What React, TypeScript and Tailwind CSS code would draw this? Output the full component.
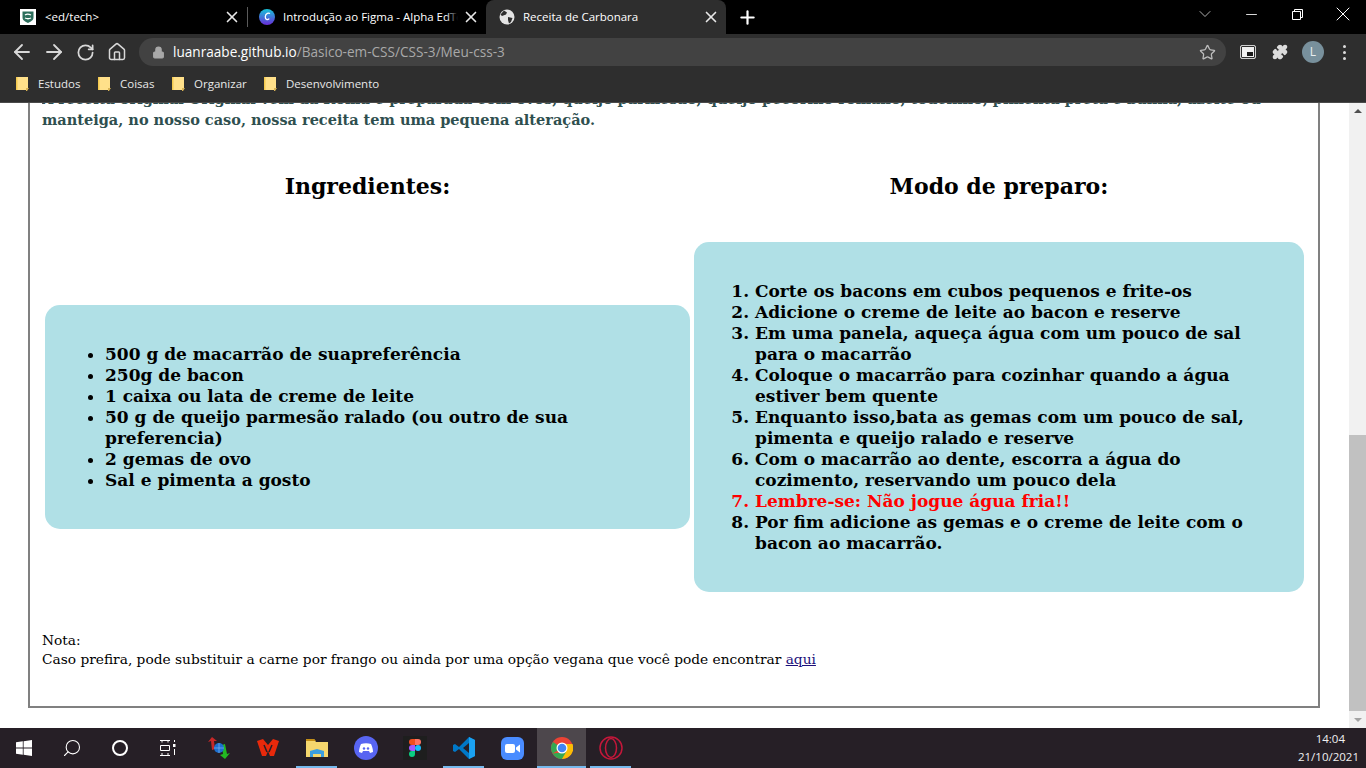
import { ArrowLeft, ArrowRight, RotateCw, Home, Lock, Star, Puzzle, X, Plus, ChevronDown, Minus, Search } from "lucide-react";

const bookmarks = [
  { nome: "Estudos", w: "w-[82px]" },
  { nome: "Coisas", w: "w-[74px]" },
  { nome: "Organizar", w: "w-[92px]" },
  { nome: "Desenvolvimento", w: "w-[130px]" },
];

const ingredientes = [
  "500 g de macarrão de suapreferência",
  "250g de bacon",
  "1 caixa ou lata de creme de leite",
  "50 g de queijo parmesão ralado (ou outro de sua preferencia)",
  "2 gemas de ovo",
  "Sal e pimenta a gosto",
];

const passos = [
  "Corte os bacons em cubos pequenos e frite-os",
  "Adicione o creme de leite ao bacon e reserve",
  "Em uma panela, aqueça água com um pouco de sal para o macarrão",
  "Coloque o macarrão para cozinhar quando a água estiver bem quente",
  "Enquanto isso,bata as gemas com um pouco de sal, pimenta e queijo ralado e reserve",
  "Com o macarrão ao dente, escorra a água do cozimento, reservando um pouco dela",
  "Lembre-se: Não jogue água fria!!",
  "Por fim adicione as gemas e o creme de leite com o bacon ao macarrão.",
];

function Folder() {
  return (
    <svg width="13" height="14" viewBox="0 0 13 14" className="shrink-0">
      <path d="M0 0h12v11l-1 2H0z" fill="#ffe08a" />
      <path d="M10 11h3l-2 3h-1z" fill="#d9b354" />
      <path d="M0 0h1.500v13H0z" fill="#f3c94f" />
    </svg>
  );
}

function TaskIcon({ children, open, active, wide }: { children: React.ReactNode; open?: boolean; active?: boolean; wide?: boolean }) {
  return (
    <div className={"relative h-[40px] flex items-center justify-center " + (wide ? "w-[49px] " : "w-[48px] ") + (active ? "bg-[#4d474c]" : "")}>
      {children}
      {open && <div className={"absolute bottom-0 h-[2px] bg-[#76b9ed] " + (active ? "left-0 right-0" : "left-[4px] right-[4px]")} />}
    </div>
  );
}

export default function App() {
  return (
    <div className="w-[1366px] h-[768px] flex flex-col overflow-hidden font-['Open_Sans',sans-serif] bg-white">
      {/* abas */}
      <div className="h-[34px] bg-black flex items-center shrink-0">
        <div className="w-[247px] h-[34px] flex items-center pl-[20px] pr-[6px] gap-[9px]">
          <svg width="16" height="16" viewBox="0 0 16 16" className="shrink-0">
            <rect width="16" height="16" fill="#fff" />
            <path d="M2.500 2.500h11v6c0 3-3 4-5.500 5.500-2.500-1.500-5.500-2.500-5.500-5.500z" fill="#2c6e5c" />
            <path d="M5 6c2-1.500 4-1 6 0M5 9c2 1 4 1 6 0" stroke="#fff" strokeWidth="1.300" fill="none" />
          </svg>
          <span className="flex-1 text-[11.500px] text-white">&lt;ed/tech&gt;</span>
          <X size={18} strokeWidth={2.2} className="text-[#e8e8e8]" />
        </div>
        <div className="w-px h-[20px] bg-[#5a5a5a]" />
        <div className="w-[238px] h-[34px] flex items-center pl-[11px] pr-[6px] gap-[8px]">
          <svg width="16" height="16" viewBox="0 0 16 16" className="shrink-0">
            <defs>
              <linearGradient id="canva" x1="0" y1="0" x2="0" y2="1">
                <stop offset="0" stopColor="#16c4d8" />
                <stop offset="1" stopColor="#6a2bd9" />
              </linearGradient>
            </defs>
            <circle cx="8" cy="8" r="8" fill="url(#canva)" />
            <path d="M10.800 4.800c-.8-1.500-4.300-.5-4.500 3-.2 3 2.200 3.500 4 1.800" fill="none" stroke="#fff" strokeWidth="1.300" />
          </svg>
          <div className="relative flex-1 overflow-hidden whitespace-nowrap text-[11.500px] text-white">
            Introdução ao Figma - Alpha EdTech
            <div className="absolute inset-y-0 right-0 w-[12px] bg-gradient-to-r from-transparent to-black" />
          </div>
          <X size={18} strokeWidth={2.2} className="-ml-[4px] text-[#e8e8e8]" />
        </div>
        <div className="w-[240px] h-[34px] bg-[#2e2e2e] rounded-t-lg flex items-center pl-[13px] pr-[6px] gap-[8px]">
          <svg width="16" height="16" viewBox="0 0 16 16" className="shrink-0">
            <circle cx="8" cy="8" r="7.500" fill="#e4e4e4" />
            <path d="M5 1.500l3 2-1 2-4 1.500-1.500-1.500zM9 8l4.500 1-1.500 4-2 1.500-1-3.500z" fill="#2e2e2e" />
          </svg>
          <span className="flex-1 text-[11.500px] text-white">Receita de Carbonara</span>
          <X size={18} strokeWidth={2.2} className="text-[#e8e8e8]" />
        </div>
        <Plus size={21} strokeWidth={2.5} className="text-white ml-[11px]" />
        <div className="flex-1" />
        <div className="flex self-start h-[28px] text-white">
          <div className="w-[46px] flex items-center justify-center">
            <ChevronDown size={20} strokeWidth={1} className="text-[#cfcfcf]" />
          </div>
          <div className="w-[46px] flex items-center justify-center">
            <Minus size={17} strokeWidth={1.2} />
          </div>
          <div className="w-[46px] flex items-center justify-center">
            <svg width="11" height="11" viewBox="0 0 11 11" fill="none" stroke="#fff">
              <path d="M.5 2.500h8v8h-8zM2.500 2.500v-2h8v8h-2" />
            </svg>
          </div>
          <div className="w-[46px] flex items-center justify-center">
            <X size={24} strokeWidth={1} />
          </div>
        </div>
      </div>

      {/* barra de endereco */}
      <div className="h-[36px] bg-[#2e2e2e] flex items-center shrink-0 pl-[10px]">
        <ArrowLeft size={24} strokeWidth={1.8} className="text-[#d8d8d8]" />
        <ArrowRight size={24} strokeWidth={1.8} className="text-[#d8d8d8] ml-[8px]" />
        <RotateCw size={19} strokeWidth={2.2} className="text-[#d8d8d8] ml-[10px]" />
        <Home size={20} strokeWidth={1.8} className="text-[#d8d8d8] ml-[12px]" />
        <div className="w-[1087px] h-[28px] bg-[#424242] rounded-full ml-[12px] flex items-center pl-[13px] pr-[10px] text-[13.600px]">
          <Lock size={13} fill="#a8a8a8" className="text-[#a8a8a8]" />
          <span className="ml-[8px] text-white">luanraabe.github.io</span>
          <span className="text-[#a9a9a9]">/Basico-em-CSS/CSS-3/Meu-css-3</span>
          <div className="flex-1" />
          <Star size={17} strokeWidth={1.8} className="text-[#bdbdbd]" />
        </div>
        <div className="w-[16px] h-[14px] ml-[14px] border border-[#cfcfcf] rounded-[2px] bg-[#f0f0f0] flex items-end justify-end p-[2px] shadow-[inset_0_0_0_1px_#2e2e2e]">
          <div className="w-[6px] h-[4px] bg-[#1a1a1a]" />
        </div>
        <Puzzle size={16} fill="#dcdcdc" className="text-[#dcdcdc] ml-[16px]" />
        <div className="w-[22px] h-[22px] rounded-full bg-[#78909c] ml-[14px] flex items-center justify-center text-[12px] text-[#e8eef0]">L</div>
        <div className="ml-[19px] flex flex-col gap-[3px]">
          <div className="w-[3px] h-[3px] rounded-full bg-[#dcdcdc]" />
          <div className="w-[3px] h-[3px] rounded-full bg-[#dcdcdc]" />
          <div className="w-[3px] h-[3px] rounded-full bg-[#dcdcdc]" />
        </div>
      </div>

      {/* favoritos */}
      <div className="h-[33px] bg-[#2e2e2e] border-b border-[#4a4a4a] flex items-center shrink-0 pl-[16px] pb-[4px]">
        {bookmarks.map((b) => (
          <div key={b.nome} className={"flex items-center gap-[9px] text-[11.500px] text-[#e8e8e8] " + b.w}>
            <Folder />
            <span>{b.nome}</span>
          </div>
        ))}
      </div>

      {/* pagina */}
      <div className="flex-1 min-h-0 flex">
        <div className="flex-1 overflow-hidden pl-[28px] pr-[29px] font-['DejaVu_Serif',serif]">
          <div className="-mt-[20px] h-[625px] border-2 border-t-0 border-[#808080] px-[12px] flex flex-col">
            <div className="h-[44px] text-[14.500px] leading-[21px] font-bold text-[#2f4f4f] mt-[5px] overflow-hidden">
              <div className="whitespace-nowrap">A receita original Original vem da Roma e preparada com ovos, queijo parmesão, queijo pecorino romano, toucinho, pimenta preta e banha, azeite ou</div>
              <div className="whitespace-nowrap">manteiga, no nosso caso, nossa receita tem uma pequena alteração.</div>
            </div>
            <div className="flex gap-[4px] ml-[3px] mt-[39px]">
              <div className="w-[645px] flex flex-col">
                <h2 className="text-[22px] leading-[30px] font-bold text-black text-center">Ingredientes:</h2>
                <div className="mt-[104px] h-[224px] bg-[#b0e0e6] rounded-[15px] pl-[60px] pr-[110px] pt-[39px]">
                  <ul className="list-disc text-[17px] leading-[21px] font-bold text-black">
                    {ingredientes.map((i) => (
                      <li key={i}>{i}</li>
                    ))}
                  </ul>
                </div>
              </div>
              <div className="w-[610px] flex flex-col">
                <h2 className="text-[22px] leading-[30px] font-bold text-black text-center">Modo de preparo:</h2>
                <div className="mt-[41px] h-[350px] bg-[#b0e0e6] rounded-[15px] pl-[61px] pr-[60px] pt-[39px]">
                  <ol className="list-decimal text-[17px] leading-[21px] font-bold text-black">
                    {passos.map((p, i) => (
                      <li key={p} className={i === 6 ? "text-[#ff0000]" : ""}>{p}</li>
                    ))}
                  </ol>
                </div>
              </div>
            </div>
            <div className="mt-[39px] text-[13.750px] leading-[19px] text-black">
              <div>Nota:</div>
              <div>
                Caso prefira, pode substituir a carne por frango ou ainda por uma opção vegana que você pode encontrar{" "}
                <a className="underline text-[#1c0f7a]">aqui</a>
              </div>
            </div>
          </div>
        </div>
        {/* barra de rolagem */}
        <div className="w-[17px] bg-[#f1f1f1] flex flex-col items-center shrink-0">
          <div className="h-[17px] flex items-center justify-center">
            <div className="w-0 h-0 border-l-[4px] border-r-[4px] border-b-[4px] border-l-transparent border-r-transparent border-b-[#505050]" />
          </div>
          <div className="w-full mt-[315px] h-[277px] bg-[#c1c1c1]" />
          <div className="h-[17px] flex items-center justify-center">
            <div className="w-0 h-0 border-l-[4px] border-r-[4px] border-t-[4px] border-l-transparent border-r-transparent border-t-[#a3a3a3]" />
          </div>
        </div>
      </div>

      {/* barra de tarefas */}
      <div className="h-[40px] bg-[#261f26] flex items-center shrink-0 text-white">
        <TaskIcon>
          <svg width="16" height="16" viewBox="0 0 16 16" fill="#fff">
            <path d="M0 2.300 6.800 1.300V7.600H0zM7.600 1.200 16 0V7.600H7.600zM0 8.400H6.800V14.700L0 13.700zM7.600 8.400H16V16L7.600 14.800z" />
          </svg>
        </TaskIcon>
        <TaskIcon>
          <Search size={20} strokeWidth={1.3} className="-scale-x-100" />
        </TaskIcon>
        <TaskIcon>
          <div className="w-[16px] h-[16px] rounded-full border-2 border-white" />
        </TaskIcon>
        <TaskIcon>
          <svg width="16" height="16" viewBox="0 0 16 16" fill="none" stroke="#fff">
            <path d="M0 .5h10M0 15.500h10M.5 5.500h9v5h-9zM2 .5v2M8 .5v2M2 13v2M8 13v2" />
            <rect x="13" y="4" width="2.500" height="3" fill="#fff" stroke="none" />
            <path d="M14.500 0v2M14.500 9v6" />
          </svg>
        </TaskIcon>
        <div className="w-[2px]" />
        <TaskIcon wide>
          <svg width="26" height="26" viewBox="0 0 26 26" fill="none">
            <path d="M6 15 5 6l-3 1 4-5 5 4-3 0 1 8z" fill="#c62828" />
            <path d="M19 9l2 10 3-1-5 6-5-4 3-1-1-9z" fill="#22b922" />
            <circle cx="13" cy="13" r="5" fill="#1c6fd0" />
            <path d="M8 13h10M13 8v10" stroke="#7fb6ee" strokeWidth="0.700" />
          </svg>
        </TaskIcon>
        <TaskIcon wide>
          <svg width="24" height="18" viewBox="0 0 24 18">
            <path d="M1 2l6-2 5 6 5-6 6 2-5 15h-4l-2-5-2 5H6z" fill="#e8290b" />
            <path d="M8 6l3 7M16 6l-3 7" stroke="#261f26" strokeWidth="1.500" />
          </svg>
        </TaskIcon>
        <TaskIcon wide open>
          <svg width="22" height="20" viewBox="0 0 22 20">
            <path d="M0 1h8l2 3h12v15H0z" fill="#f5d76e" />
            <path d="M0 1h8l2 2H0z" fill="#c48f17" />
            <path d="M4 19v-6l7-2 7 2v6h-3v-3H7v3z" fill="#3b9ee0" />
          </svg>
        </TaskIcon>
        <TaskIcon wide>
          <div className="w-[24px] h-[24px] rounded-full bg-[#5865f2] flex items-center justify-center">
            <svg width="14" height="10" viewBox="0 0 14 10">
              <path d="M2 1c3-1 7-1 10 0 1 2 2 5 2 8l-3 1-1-2H4l-1 2-3-1c0-3 1-6 2-8z" fill="#fff" />
              <circle cx="5" cy="5.500" r="1.200" fill="#5865f2" />
              <circle cx="9" cy="5.500" r="1.200" fill="#5865f2" />
            </svg>
          </div>
        </TaskIcon>
        <TaskIcon wide>
          <div className="w-[24px] h-[24px] bg-[#1e1e1e] flex items-center justify-center">
            <svg width="12" height="20" viewBox="0 0 12 18">
              <path d="M3 0h3v6H3a3 3 0 0 1 0-6z" fill="#f24e1e" />
              <path d="M6 0h3a3 3 0 0 1 0 6H6z" fill="#ff7262" />
              <path d="M3 6h3v6H3a3 3 0 0 1 0-6z" fill="#a259ff" />
              <circle cx="9" cy="9" r="3" fill="#1abcfe" />
              <path d="M3 12h3v3a3 3 0 1 1-3-3z" fill="#0acf83" />
            </svg>
          </div>
        </TaskIcon>
        <TaskIcon wide open>
          <svg width="24" height="24" viewBox="0 0 24 24">
            <path d="M17 1l6 3v16l-6 3-10-10-4 3-2-1V9l2-1 4 3z" fill="#0078c8" />
            <path d="M17 1l6 3v16l-6 3z" fill="#1ba1f1" />
            <path d="M17 7l-6 5 6 5z" fill="#261f26" />
          </svg>
        </TaskIcon>
        <TaskIcon wide>
          <div className="w-[23px] h-[23px] rounded-[6px] bg-[#4a8cff] flex items-center justify-center">
            <svg width="15" height="9" viewBox="0 0 15 9" fill="#fff">
              <rect width="10" height="9" rx="2" />
              <path d="M11 3.500 15 .5v8l-4-3z" />
            </svg>
          </div>
        </TaskIcon>
        <TaskIcon wide open active>
          <svg width="22" height="22" viewBox="0 0 22 22">
            <circle cx="11" cy="11" r="11" fill="#ea4335" />
            <path d="M11 11 1.500 16.500A11 11 0 0 1 2 5z" fill="#34a853" />
            <path d="M11 22A11 11 0 0 0 21.500 7H11z" fill="#fbbc05" />
            <path d="M1.500 16.500A11 11 0 0 0 11 22l4-7z" fill="#34a853" />
            <circle cx="11" cy="11" r="5.500" fill="#fff" />
            <circle cx="11" cy="11" r="4.300" fill="#4285f4" />
          </svg>
        </TaskIcon>
        <TaskIcon wide open>
          <svg width="24" height="24" viewBox="0 0 24 24" fill="none" stroke="#c4173a" strokeWidth="1.500">
            <circle cx="12" cy="12" r="11" />
            <ellipse cx="12" cy="12" rx="5.500" ry="9.500" />
          </svg>
        </TaskIcon>
        <div className="flex-1" />
        <div className="flex flex-col items-end text-[11.500px] leading-[18px] text-[#f0f0f0] pr-[7px]">
          <span className="pr-[14px]">14:04</span>
          <span>21/10/2021</span>
        </div>
      </div>
    </div>
  );
}
